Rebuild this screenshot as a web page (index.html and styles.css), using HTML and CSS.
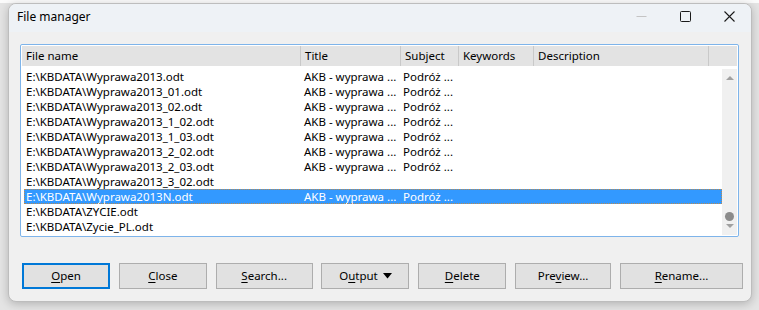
FILE: index.html
```html
<!DOCTYPE html>
<html lang="en">

<head>
    <meta charset="UTF-8">
    <title>File manager</title>
    <link rel="stylesheet" href="styles.css">
</head>

<body>

    <div class="desktop">
        <div class="dialog">
            <header class="titlebar">
                <div class="title">File manager</div>
                <div class="controls">
                    <span class="ctl ctl-min"><svg width="11" height="11" viewBox="0 0 11 11"><path d="M0.5 5.5h10" stroke="#c4c4c4" stroke-width="1"/></svg></span>
                    <span class="ctl"><svg width="11" height="11" viewBox="0 0 11 11"><rect x="0.5" y="0.5" width="10" height="10" rx="1" fill="none" stroke="#1a1a1a" stroke-width="1"/></svg></span>
                    <span class="ctl"><svg width="11" height="11" viewBox="0 0 11 11"><path d="M0.5 0.5l10 10M10.5 0.5l-10 10" stroke="#1a1a1a" stroke-width="1.1"/></svg></span>
                </div>
            </header>

            <div class="content">
                <div class="listbox">
                    <div class="list-header">
                        <div class="col col-name">File name</div>
                        <div class="col col-title">Title</div>
                        <div class="col col-subject">Subject</div>
                        <div class="col col-keywords">Keywords</div>
                        <div class="col col-desc">Description</div>
                        <div class="col col-fill"></div>
                    </div>
                    <div class="list-body">
                        <div class="rows">
                            <div class="row"><div class="cell col-name">E:\KBDATA\Wyprawa2013.odt</div><div class="cell col-title">AKB - wyprawa ...</div><div class="cell col-subject">Podróż ...</div></div>
                            <div class="row"><div class="cell col-name">E:\KBDATA\Wyprawa2013_01.odt</div><div class="cell col-title">AKB - wyprawa ...</div><div class="cell col-subject">Podróż ...</div></div>
                            <div class="row"><div class="cell col-name">E:\KBDATA\Wyprawa2013_02.odt</div><div class="cell col-title">AKB - wyprawa ...</div><div class="cell col-subject">Podróż ...</div></div>
                            <div class="row"><div class="cell col-name">E:\KBDATA\Wyprawa2013_1_02.odt</div><div class="cell col-title">AKB - wyprawa ...</div><div class="cell col-subject">Podróż ...</div></div>
                            <div class="row"><div class="cell col-name">E:\KBDATA\Wyprawa2013_1_03.odt</div><div class="cell col-title">AKB - wyprawa ...</div><div class="cell col-subject">Podróż ...</div></div>
                            <div class="row"><div class="cell col-name">E:\KBDATA\Wyprawa2013_2_02.odt</div><div class="cell col-title">AKB - wyprawa ...</div><div class="cell col-subject">Podróż ...</div></div>
                            <div class="row"><div class="cell col-name">E:\KBDATA\Wyprawa2013_2_03.odt</div><div class="cell col-title">AKB - wyprawa ...</div><div class="cell col-subject">Podróż ...</div></div>
                            <div class="row"><div class="cell col-name">E:\KBDATA\Wyprawa2013_3_02.odt</div></div>
                            <div class="row selected"><div class="cell col-name">E:\KBDATA\Wyprawa2013N.odt</div><div class="cell col-title">AKB - wyprawa ...</div><div class="cell col-subject">Podróż ...</div></div>
                            <div class="row"><div class="cell col-name">E:\KBDATA\ZYCIE.odt</div></div>
                            <div class="row"><div class="cell col-name">E:\KBDATA\Zycie_PL.odt</div></div>
                        </div>
                        <div class="scrollbar">
                            <svg width="8" height="5" viewBox="0 0 8 5"><path d="M0 5L4 1L8 5Z" fill="#a0a0a0"/></svg>
                            <div class="track"><div class="thumb"></div></div>
                            <svg width="8" height="5" viewBox="0 0 8 5"><path d="M0 0L4 4L8 0Z" fill="#a0a0a0"/></svg>
                        </div>
                    </div>
                </div>

                <div class="buttons">
                    <button class="btn btn-default w-open"><u>O</u>pen</button>
                    <button class="btn w-close"><u>C</u>lose</button>
                    <button class="btn w-search"><u>S</u>earch...</button>
                    <button class="btn w-output">O<u>u</u>tput <svg class="caret" width="9" height="6" viewBox="0 0 9 6"><path d="M0 0H9L4.5 5.5Z" fill="#000"/></svg></button>
                    <button class="btn w-delete"><u>D</u>elete</button>
                    <button class="btn w-preview">Pre<u>v</u>iew...</button>
                    <button class="btn w-rename"><u>R</u>ename...</button>
                </div>
            </div>
        </div>
    </div>

</body>

</html>
```

FILE: styles.css
```css
:root {
    --face: #f0f0f0;
    --title-bg: #eef2f6;
    --btn-face: #e1e1e1;
    --btn-border: #adadad;
    --accent: #0078d7;
    --select: #3399ff;
    --list-border: #7eb4ea;
}

* {
    margin: 0;
    padding: 0;
    box-sizing: border-box;
}

body {
    font-family: 'Noto Sans', 'Open Sans', sans-serif;
    font-size: 11.5px;
    color: #000;
    background: linear-gradient(to bottom, #fbfbfb 0, #fbfbfb 3px, #e4e4e4 3px);
    width: 759px;
    height: 310px;
    overflow: hidden;
}

.desktop {
    padding: 3px 7px 8px 8px;
}

.dialog {
    width: 744px;
    height: 299px;
    background-color: var(--face);
    border: 1px solid #bdbdbd;
    border-radius: 8px;
    box-shadow: 0 2px 10px rgba(0, 0, 0, 0.22);
    overflow: hidden;
    display: flex;
    flex-direction: column;
}

.titlebar {
    height: 28px;
    background-color: var(--title-bg);
    display: flex;
    justify-content: space-between;
    align-items: center;
    padding-left: 8px;
}

.title {
    font-size: 12px;
    line-height: 16px;
    padding-bottom: 3px;
}

.controls {
    display: flex;
    align-items: center;
    height: 100%;
    padding-bottom: 3px;
}

.ctl {
    width: 44px;
    display: flex;
    justify-content: center;
    align-items: center;
}

.content {
    padding: 12px 11px 0 11px;
}

.listbox {
    width: 719px;
    height: 193px;
    background: #fff;
    border: 1px solid var(--list-border);
    border-radius: 2px;
    padding: 1px;
    display: flex;
    flex-direction: column;
}

.list-header {
    display: flex;
    height: 20px;
    background-color: #e3e3e3;
    margin-bottom: 3px;
    flex-shrink: 0;
}

.col {
    line-height: 20px;
    padding-left: 4px;
    border-left: 1px solid #c9c9c9;
    white-space: nowrap;
}

.list-header .col:first-child {
    border-left: none;
}

.col-name { width: 278px; }
.col-title { width: 100px; }
.col-subject { width: 58px; }
.col-keywords { width: 75px; }
.col-desc { width: 175px; }
.col-fill { flex: 1; }

.list-body {
    display: flex;
    flex: 1;
}

.rows {
    flex: 1;
}

.row {
    display: flex;
    height: 15px;
    line-height: 15px;
}

.cell {
    padding-left: 4px;
    white-space: nowrap;
    overflow: hidden;
}

.row .col-title {
    padding-left: 4px;
}

.row .col-subject {
    padding-left: 3px;
    width: auto;
}

.row.selected {
    background-color: var(--select);
    color: #fff;
    outline: 1px dotted #b98a50;
    outline-offset: -1px;
    margin-left: 2px;
}

.row.selected .col-name {
    width: 276px;
    padding-left: 2px;
}

.scrollbar {
    width: 15px;
    background-color: #f0f0f0;
    display: flex;
    flex-direction: column;
    align-items: center;
    padding: 6px 0 6px;
}

.track {
    flex: 1;
    width: 100%;
    display: flex;
    flex-direction: column;
    justify-content: flex-end;
    align-items: center;
    padding-bottom: 3px;
}

.thumb {
    width: 9px;
    height: 9px;
    border-radius: 50%;
    background-color: #8b8b8b;
}

.buttons {
    display: flex;
    justify-content: space-between;
    margin-top: 26px;
    padding-left: 2px;
    margin-right: -3px;
}

.btn {
    height: 26px;
    font-family: inherit;
    font-size: 11.5px;
    line-height: 24px;
    color: #000;
    background-color: var(--btn-face);
    border: 1px solid var(--btn-border);
    text-align: center;
    white-space: nowrap;
}

.btn u {
    text-underline-offset: 2px;
}

.btn-default {
    border: 2px solid var(--accent);
    line-height: 22px;
}

.caret {
    margin-left: 2px;
    vertical-align: 1px;
}

.w-open { width: 88px; }
.w-close { width: 88px; }
.w-search { width: 97px; }
.w-output { width: 88px; }
.w-delete { width: 88px; }
.w-preview { width: 96px; }
.w-rename { width: 123px; }
```
